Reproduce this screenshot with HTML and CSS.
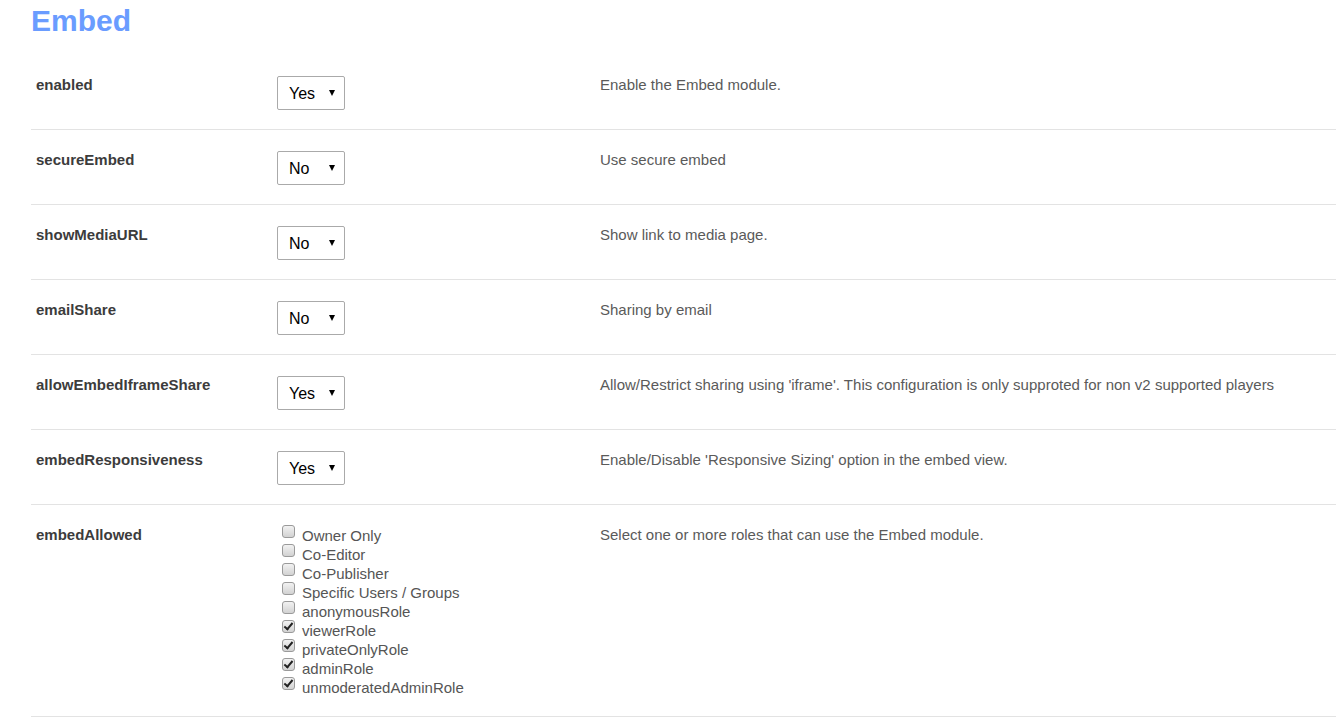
FILE: index.html
```html
<!DOCTYPE html>
<html>
<head>
<meta charset="utf-8">
<link rel="stylesheet" href="styles.css">
</head>
<body>
<div class="page">
  <h1 class="title">Embed</h1>
  <div class="rows">
    <div class="row">
      <div class="name">enabled</div>
      <div class="control"><span class="sel"><select><option>Yes</option><option>No</option></select></span></div>
      <div class="desc">Enable the Embed module.</div>
    </div>
    <div class="row">
      <div class="name">secureEmbed</div>
      <div class="control"><span class="sel"><select><option>No</option><option>Yes</option></select></span></div>
      <div class="desc">Use secure embed</div>
    </div>
    <div class="row">
      <div class="name">showMediaURL</div>
      <div class="control"><span class="sel"><select><option>No</option><option>Yes</option></select></span></div>
      <div class="desc">Show link to media page.</div>
    </div>
    <div class="row">
      <div class="name">emailShare</div>
      <div class="control"><span class="sel"><select><option>No</option><option>Yes</option></select></span></div>
      <div class="desc">Sharing by email</div>
    </div>
    <div class="row">
      <div class="name">allowEmbedIframeShare</div>
      <div class="control"><span class="sel"><select><option>Yes</option><option>No</option></select></span></div>
      <div class="desc">Allow/Restrict sharing using 'iframe'. This configuration is only supproted for non v2 supported players</div>
    </div>
    <div class="row">
      <div class="name">embedResponsiveness</div>
      <div class="control"><span class="sel"><select><option>Yes</option><option>No</option></select></span></div>
      <div class="desc">Enable/Disable 'Responsive Sizing' option in the embed view.</div>
    </div>
    <div class="row">
      <div class="name">embedAllowed</div>
      <div class="control">
        <div class="checks">
          <label class="check"><input type="checkbox"><span>Owner Only</span></label>
          <label class="check"><input type="checkbox"><span>Co-Editor</span></label>
          <label class="check"><input type="checkbox"><span>Co-Publisher</span></label>
          <label class="check"><input type="checkbox"><span>Specific Users / Groups</span></label>
          <label class="check"><input type="checkbox"><span>anonymousRole</span></label>
          <label class="check"><input type="checkbox" checked><span>viewerRole</span></label>
          <label class="check"><input type="checkbox" checked><span>privateOnlyRole</span></label>
          <label class="check"><input type="checkbox" checked><span>adminRole</span></label>
          <label class="check"><input type="checkbox" checked><span>unmoderatedAdminRole</span></label>
        </div>
      </div>
      <div class="desc">Select one or more roles that can use the Embed module.</div>
    </div>
  </div>
</div>
</body>
</html>
```

FILE: styles.css
```css
html, body {
  margin: 0;
  padding: 0;
  background: #fff;
}
body {
  font-family: Arial, "Liberation Sans", sans-serif;
  color: #555;
}
.page {
  padding-left: 31px;
}
.title {
  margin: 3px 0 16px 0;
  font-size: 30px;
  line-height: 36px;
  font-weight: bold;
  color: #6a9cff;
}
.row {
  display: grid;
  grid-template-columns: 241px 323px 1fr;
  padding: 19px 0 19px 5px;
  border-bottom: 1px solid #e3e3e3;
}
.name {
  padding-top: 1px;
  font-size: 15px;
  line-height: 20px;
  font-weight: bold;
  color: #3c3c3c;
}
.desc {
  padding-top: 1px;
  font-size: 15px;
  line-height: 20px;
  color: #5a5a5a;
}
.control {
  min-height: 36px;
}
.sel {
  position: relative;
  display: inline-block;
  margin-top: 2px;
}
.sel select {
  -webkit-appearance: none;
  appearance: none;
  display: block;
  width: 68px;
  height: 34px;
  margin: 0;
  padding: 0 0 0 11px;
  border: 1px solid #aaa;
  border-radius: 2px;
  background: #fff;
  color: #000;
  font-family: Arial, "Liberation Sans", sans-serif;
  font-size: 16px;
}
.sel::after {
  content: "";
  position: absolute;
  right: 10px;
  top: 14px;
  width: 0;
  height: 0;
  border-left: 3.5px solid transparent;
  border-right: 3.5px solid transparent;
  border-top: 6px solid #000;
  pointer-events: none;
}
.checks {
  margin-top: 2px;
  display: flex;
  flex-direction: column;
}
.check {
  display: flex;
  align-items: flex-start;
  font-size: 15px;
  line-height: 19px;
  height: 19px;
  color: #555;
}
.check input {
  -webkit-appearance: none;
  appearance: none;
  position: relative;
  box-sizing: border-box;
  width: 13px;
  height: 13px;
  margin: -1px 7px 0 5px;
  border: 1px solid #9a9a9a;
  border-radius: 3px;
  background: linear-gradient(#f2f2f2, #d2d2d2);
  flex: none;
}
.check input:checked::before {
  content: "";
  position: absolute;
  left: 3px;
  top: 0px;
  width: 3px;
  height: 7px;
  border-right: 2px solid #222;
  border-bottom: 2px solid #222;
  transform: rotate(40deg);
}
```
